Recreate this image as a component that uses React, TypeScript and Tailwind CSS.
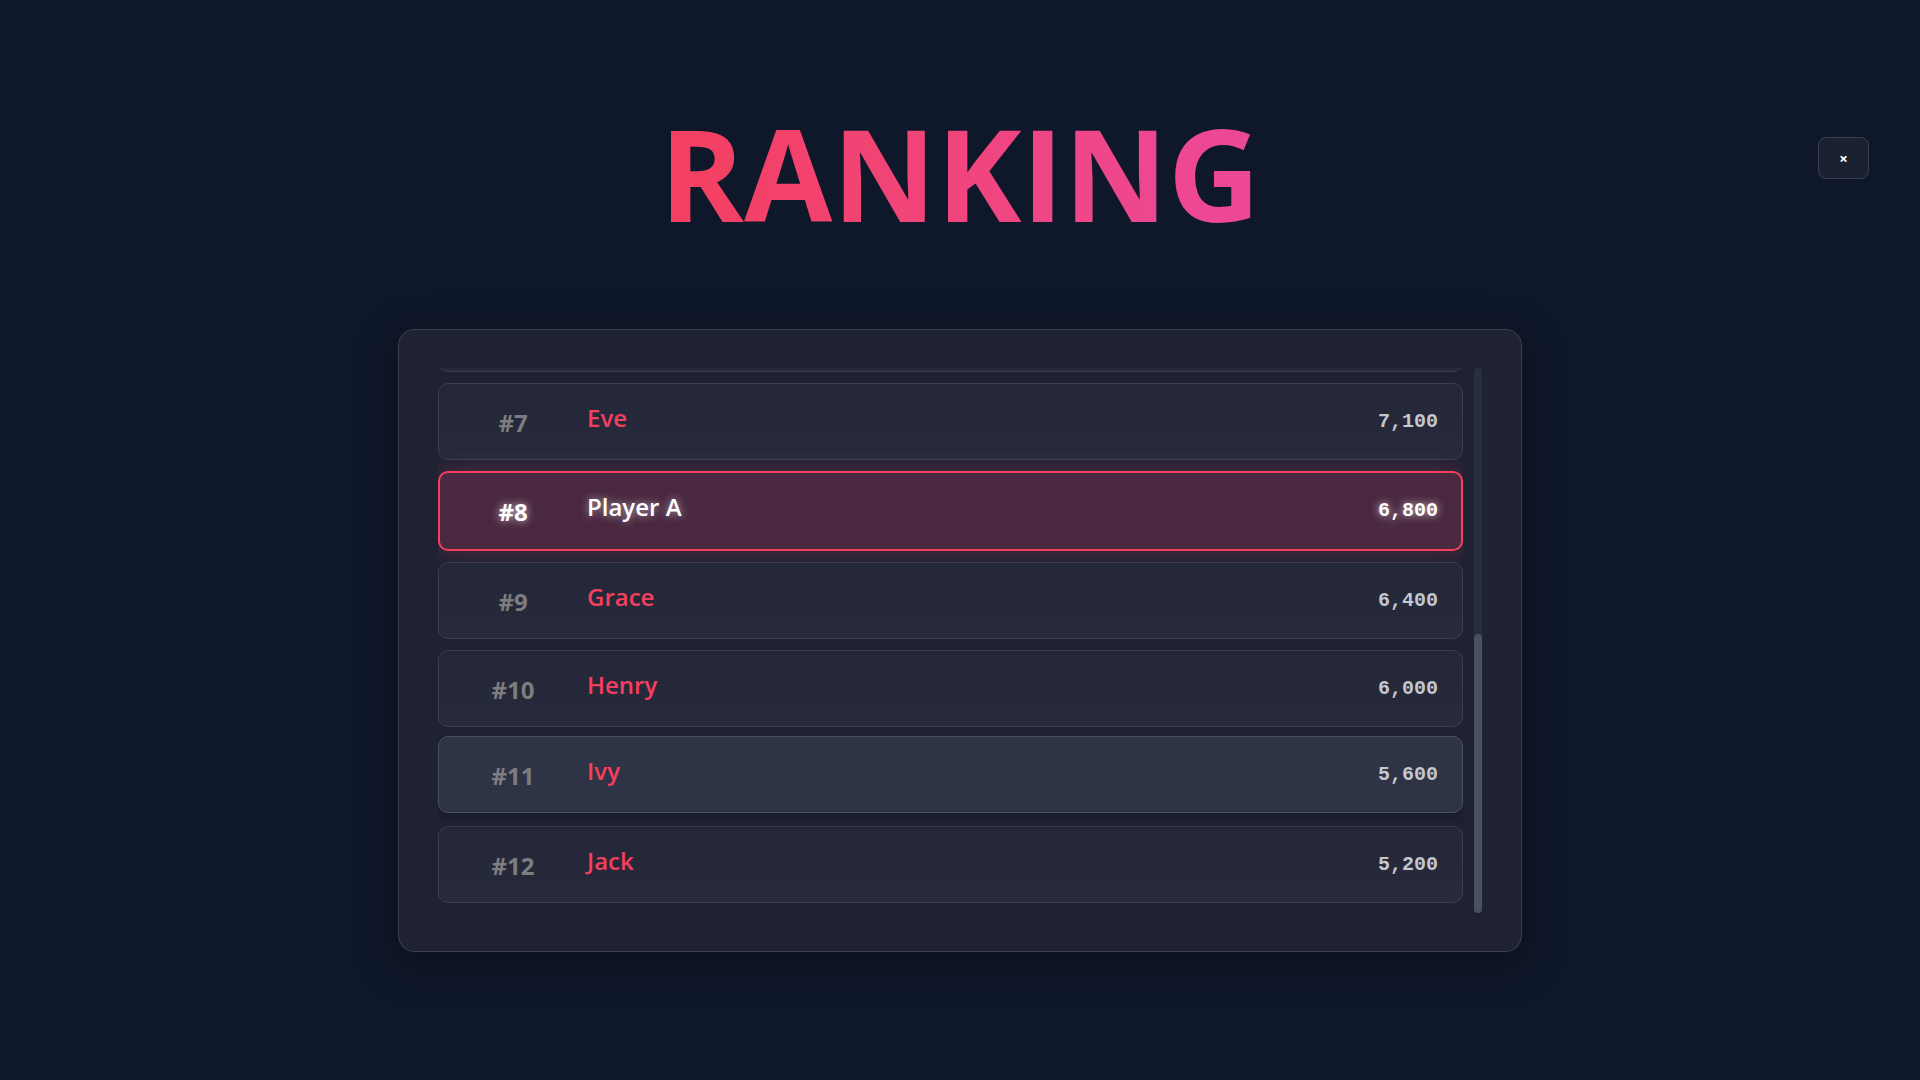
import { useLayoutEffect, useRef } from "react";

type Entry = { rank: number; name: string; score: number };

const players: Entry[] = [
  { rank: 1, name: "Alice", score: 9800 },
  { rank: 2, name: "Bob", score: 9200 },
  { rank: 3, name: "Charlie", score: 8900 },
  { rank: 4, name: "David", score: 8500 },
  { rank: 5, name: "Frank", score: 8000 },
  { rank: 6, name: "Diana", score: 7600 },
  { rank: 7, name: "Eve", score: 7100 },
  { rank: 8, name: "Player A", score: 6800 },
  { rank: 9, name: "Grace", score: 6400 },
  { rank: 10, name: "Henry", score: 6000 },
  { rank: 11, name: "Ivy", score: 5600 },
  { rank: 12, name: "Jack", score: 5200 },
];

const ME = 8;
const HOVERED = 11;

const Row = ({ entry }: { entry: Entry }) => {
  const isMe = entry.rank === ME;
  const isHover = entry.rank === HOVERED;

  if (isMe) {
    return (
      <div className="flex items-center h-[80px] px-[23px] rounded-[10px] border-2 border-[#f43f5e] bg-[#4a2940] shadow-[0_0_22px_rgba(244,63,94,0.28)]">
        <div className="w-[100px] mt-[2px] text-center text-[24px] font-bold text-white [text-shadow:0_0_8px_rgba(255,255,255,0.75)]">
          #{entry.rank}
        </div>
        <div className="ml-6 mb-[8px] text-[24px] font-semibold text-white [text-shadow:0_0_8px_rgba(255,255,255,0.6)]">
          {entry.name}
        </div>
        <div className="ml-auto font-['Liberation_Mono',monospace] text-[20px] font-bold text-white [text-shadow:0_0_8px_rgba(255,255,255,0.75)]">
          {entry.score.toLocaleString("en-US")}
        </div>
      </div>
    );
  }

  return (
    <div
      className={
        isHover
          ? "flex items-center h-[77px] px-6 rounded-[10px] border border-[#4a5062] bg-[#2e3346] -translate-y-[2px] shadow-[0_4px_12px_rgba(0,0,0,0.25)]"
          : "flex items-center h-[77px] px-6 rounded-[10px] border border-[#3a3f51] bg-gradient-to-b from-[#232738] to-[#262a3b]"
      }
    >
      <div className="w-[100px] mt-[2px] text-center text-[24px] font-bold text-[#7d7d80]">
        #{entry.rank}
      </div>
      <div className="ml-6 mb-[8px] text-[24px] font-semibold text-[#f43f5e]">
        {entry.name}
      </div>
      <div className="ml-auto font-['Liberation_Mono',monospace] text-[20px] font-bold text-[#c3c7cf]">
        {entry.score.toLocaleString("en-US")}
      </div>
    </div>
  );
};

export default function App() {
  const listRef = useRef<HTMLDivElement>(null);

  useLayoutEffect(() => {
    if (listRef.current) {
      listRef.current.scrollTop = listRef.current.scrollHeight;
    }
  }, []);

  return (
    <div className="relative min-h-screen bg-[#0f172a] font-['Open_Sans',sans-serif] flex flex-col items-center">
      {/* Close button */}
      <button className="absolute top-[137px] right-[51px] w-[51px] h-[42px] flex items-center justify-center rounded-lg border border-[#394050] bg-[#1c2132] text-white text-[15px] font-bold">
        ×
      </button>

      {/* Title */}
      <h1 className="pt-[109px] text-[128px] leading-none font-bold bg-gradient-to-r from-[#f43f5e] to-[#ec4899] bg-clip-text text-transparent">
        RANKING
      </h1>

      {/* Board */}
      <div className="mt-[92px] w-[1124px] h-[623px] px-[39px] py-[38px] rounded-2xl border border-[#3a3f51] bg-[#1e2233] shadow-[0_10px_40px_rgba(0,0,0,0.35)] flex">
        <div
          ref={listRef}
          className="flex-1 min-w-0 h-full overflow-y-auto [scrollbar-width:none] [&::-webkit-scrollbar]:hidden"
        >
          <div className="flex flex-col gap-[11px] pt-[2px] pb-[10px]">
            {players.map((p) => (
              <Row key={p.rank} entry={p} />
            ))}
          </div>
        </div>

        {/* Scrollbar */}
        <div className="ml-[11px] w-[8px] h-full rounded-full bg-[#292e3f] flex flex-col justify-end">
          <div className="h-[279px] rounded-full bg-[#4a5062]" />
        </div>
      </div>
    </div>
  );
}
